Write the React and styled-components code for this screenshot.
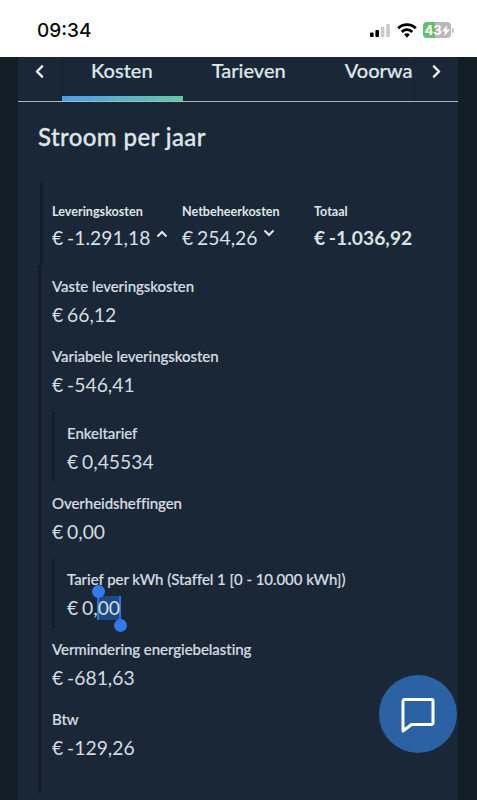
import React from 'react';
import styled, { createGlobalStyle } from 'styled-components';
import { FaChevronLeft, FaChevronRight } from 'react-icons/fa';

const GlobalStyle = createGlobalStyle`
  html, body {
    margin: 0;
    padding: 0;
    background: #131d26;
  }
  * {
    box-sizing: border-box;
  }
`;

const costItems = [
  { label: 'Vaste leveringskosten', value: '€ 66,12' },
  {
    label: 'Variabele leveringskosten',
    value: '€ -546,41',
    sub: { label: 'Enkeltarief', value: '€ 0,45534' }
  },
  {
    label: 'Overheidsheffingen',
    value: '€ 0,00',
    sub: { label: 'Tarief per kWh (Staffel 1 [0 - 10.000 kWh])', selected: true }
  },
  { label: 'Vermindering energiebelasting', value: '€ -681,63' },
  { label: 'Btw', value: '€ -129,26' }
];

const App = () => {
  return (
    <Page>
      <GlobalStyle />
      <StatusBar>
        <Clock>09:34</Clock>
        <StatusIcons>
          <SignalIcon />
          <WifiIcon />
          <Battery>
            <BatteryText>43</BatteryText>
            <BoltIcon />
          </Battery>
          <BatteryCap />
        </StatusIcons>
      </StatusBar>
      <Panel>
        <TabBar>
          <TabArrow>
            <FaChevronLeft size={15} />
          </TabArrow>
          <TabScroller>
            <Tab $active>Kosten</Tab>
            <Tab>Tarieven</Tab>
            <Tab>Voorwaarden</Tab>
          </TabScroller>
          <TabArrow $right>
            <FaChevronRight size={15} />
          </TabArrow>
        </TabBar>
        <Title>Stroom per jaar</Title>
        <Summary>
          <SummaryCell $width={130}>
            <SummaryLabel>Leveringskosten</SummaryLabel>
            <SummaryValue>
              € -1.291,18
              <Caret viewBox="0 0 12 8">
                <path d="M1.5 6.5 6 2l4.5 4.5" />
              </Caret>
            </SummaryValue>
          </SummaryCell>
          <SummaryCell $width={132}>
            <SummaryLabel>Netbeheerkosten</SummaryLabel>
            <SummaryValue>
              € 254,26
              <Caret viewBox="0 0 12 8" $down>
                <path d="M1.5 1.5 6 6l4.5-4.5" />
              </Caret>
            </SummaryValue>
          </SummaryCell>
          <SummaryCell>
            <SummaryLabel>Totaal</SummaryLabel>
            <SummaryValue $bold>€ -1.036,92</SummaryValue>
          </SummaryCell>
        </Summary>
        <CostList>
          {costItems.map((item) => (
            <React.Fragment key={item.label}>
              <CostItem>
                <CostLabel>{item.label}</CostLabel>
                <CostValue>{item.value}</CostValue>
              </CostItem>
              {item.sub && (
                <SubItem>
                  <CostLabel>{item.sub.label}</CostLabel>
                  {item.sub.selected ? (
                    <CostValue>
                      € 0,
                      <Selection>
                        00
                        <StartHandle />
                        <EndHandle />
                      </Selection>
                    </CostValue>
                  ) : (
                    <CostValue>{item.sub.value}</CostValue>
                  )}
                </SubItem>
              )}
            </React.Fragment>
          ))}
        </CostList>
      </Panel>
      <ChatButton>
        <svg width="38" height="38" viewBox="0 0 38 38" fill="none">
          <path
            d="M5.5 4.5h27a1.5 1.5 0 0 1 1.5 1.5v22a1.5 1.5 0 0 1-1.5 1.5H12.5L4 36V6a1.5 1.5 0 0 1 1.5-1.5Z"
            stroke="#fff"
            strokeWidth="3"
            strokeLinejoin="round"
          />
        </svg>
      </ChatButton>
    </Page>
  );
};

const SignalIcon = () => (
  <svg width="20" height="13" viewBox="0 0 20 13">
    <rect x="0" y="8.5" width="3.6" height="4.5" rx="1" fill="#000" />
    <rect x="5.4" y="6" width="3.6" height="7" rx="1" fill="#000" />
    <rect x="10.8" y="3" width="3.6" height="10" rx="1" fill="#c9c9c9" />
    <rect x="16.2" y="0" width="3.6" height="13" rx="1" fill="#c9c9c9" />
  </svg>
);

const WifiIcon = () => (
  <svg width="20" height="15" viewBox="0 0 21 15" fill="#000">
    <path d="M10.5 0C6.5 0 3 1.5.3 4.1l2 2.1a11.5 11.5 0 0 1 16.4 0l2-2.1C18 1.5 14.5 0 10.5 0Z" />
    <path d="M10.5 5.2c-2.6 0-4.8 1-6.5 2.7l2 2.1a6.3 6.3 0 0 1 9 0l2-2.1a9 9 0 0 0-6.5-2.7Z" />
    <path d="M10.5 10.4c-1.2 0-2.2.5-3 1.2l3 3.4 3-3.4a4.3 4.3 0 0 0-3-1.2Z" />
  </svg>
);

const BoltIcon = () => (
  <svg width="8" height="11" viewBox="0 0 8 11" fill="#fff">
    <path d="M5 0 0 6.2h3L2.4 11 8 4.5H4.6L5 0Z" />
  </svg>
);

const Page = styled.div`
  position: relative;
  width: 477px;
  height: 800px;
  overflow: hidden;
  background: #131d26;
  font-family: Lato, 'Liberation Sans', sans-serif;
`;

const StatusBar = styled.div`
  height: 57px;
  background: #fff;
  display: flex;
  align-items: center;
  justify-content: space-between;
  padding: 3px 23px 0 37px;
`;

const Clock = styled.div`
  font-family: Inter, 'Liberation Sans', sans-serif;
  font-size: 19px;
  font-weight: 500;
  color: #0b0b0b;
`;

const StatusIcons = styled.div`
  display: flex;
  align-items: center;
  gap: 7px;
`;

const Battery = styled.div`
  width: 28px;
  height: 16px;
  margin-left: -1px;
  border-radius: 4px;
  background: linear-gradient(90deg, #67bf6e 0 43%, #b9b9b9 43% 100%);
  display: flex;
  align-items: center;
  justify-content: center;
`;

const BatteryText = styled.span`
  font-family: Inter, 'Liberation Sans', sans-serif;
  font-size: 13px;
  font-weight: 700;
  line-height: 1;
  color: #fff;
`;

const BatteryCap = styled.div`
  width: 2px;
  height: 5px;
  margin-left: -6px;
  border-radius: 0 2px 2px 0;
  background: #c4c4c4;
`;

const Panel = styled.div`
  width: 440px;
  height: 743px;
  margin-left: 18px;
  background: #192736;
`;

const TabBar = styled.div`
  height: 45px;
  display: flex;
  border-bottom: 1px solid #aeb6bc;
`;

const TabArrow = styled.div`
  flex: none;
  width: ${(p) => (p.$right ? '45px' : '44px')};
  height: 44px;
  padding-bottom: 15px;
  display: flex;
  align-items: center;
  justify-content: center;
  color: #e6eaee;
  border-left: ${(p) => (p.$right ? '1px solid #17232f' : 'none')};
  border-right: ${(p) => (p.$right ? 'none' : '1px solid #17232f')};
`;

const TabScroller = styled.div`
  flex: 1;
  min-width: 0;
  display: flex;
  overflow: hidden;
`;

const Tab = styled.div`
  flex: none;
  position: relative;
  height: 44px;
  padding: 0 30px 18px 29px;
  display: flex;
  align-items: center;
  font-size: 20px;
  font-weight: 500;
  color: #dfe5e9;
  white-space: nowrap;
  -webkit-text-stroke: 0.2px #dfe5e9;

  &::after {
    content: '';
    display: ${(p) => (p.$active ? 'block' : 'none')};
    position: absolute;
    left: 0;
    right: 0;
    bottom: 0;
    height: 5px;
    background: linear-gradient(90deg, #4a9fe6, #62c9a9);
  }
`;

const Title = styled.h1`
  margin: 0;
  padding: 19px 0 0 20px;
  height: 80px;
  font-size: 24px;
  line-height: 32px;
  font-weight: 500;
  letter-spacing: 0.4px;
  color: #dfe5e9;
  -webkit-text-stroke: 0.3px #dfe5e9;
`;

const Summary = styled.div`
  height: 83px;
  margin-left: 22px;
  padding: 20px 0 0 9px;
  display: flex;
  border-left: 3px solid #131e29;
`;

const SummaryCell = styled.div`
  flex: none;
  width: ${(p) => (p.$width ? `${p.$width}px` : 'auto')};
  white-space: nowrap;
`;

const SummaryLabel = styled.div`
  font-size: 12.6px;
  line-height: 20px;
  font-weight: 700;
  color: #dfe5e9;
`;

const SummaryValue = styled.div`
  margin-top: 2px;
  font-size: 19.3px;
  line-height: 28px;
  word-spacing: -1px;
  font-weight: ${(p) => (p.$bold ? 700 : 400)};
  color: #dbe1e6;
`;

const Caret = styled.svg`
  width: 12px;
  height: 8px;
  margin-left: 6px;
  vertical-align: ${(p) => (p.$down ? '8px' : '7px')};
  fill: none;
  stroke: #e6eaee;
  stroke-width: 2;
`;

const CostList = styled.div`
  margin-left: 20px;
  height: 528px;
  padding-left: 11px;
  border-left: 3px solid #131e29;
`;

const CostItem = styled.div`
  height: 70px;
  padding-top: 11px;
`;

const SubItem = styled.div`
  height: 70px;
  margin: 6.5px 0 0 0;
  padding: 11px 0 0 12px;
  border-left: 3px solid #131e29;
`;

const CostLabel = styled.div`
  font-size: 15px;
  line-height: 20px;
  font-weight: 500;
  letter-spacing: -0.05px;
  color: #d5dce1;
  white-space: nowrap;
  -webkit-text-stroke: 0.2px #d5dce1;
`;

const CostValue = styled.div`
  margin-top: 5px;
  font-size: 19.3px;
  line-height: 28px;
  word-spacing: -1px;
  color: #d5dce1;
`;

const Selection = styled.span`
  position: relative;
  display: inline-block;
  height: 24px;
  margin: 0 -1px;
  padding: 0 1px;
  line-height: 24px;
  background: #1d4a80;
  box-shadow: inset 2px 0 0 #2b6fe0, inset -2px 0 0 #2b6fe0;
`;

const StartHandle = styled.i`
  position: absolute;
  left: -5px;
  top: -11px;
  width: 13px;
  height: 13px;
  border-radius: 50%;
  background: #3478f0;
`;

const EndHandle = styled.i`
  position: absolute;
  right: -6px;
  bottom: -12px;
  width: 13px;
  height: 13px;
  border-radius: 50%;
  background: #3478f0;
`;

const ChatButton = styled.div`
  position: absolute;
  left: 379px;
  top: 675px;
  width: 78px;
  height: 78px;
  border-radius: 50%;
  background: #2a62a3;
  display: flex;
  align-items: center;
  justify-content: center;
`;

export default App;
